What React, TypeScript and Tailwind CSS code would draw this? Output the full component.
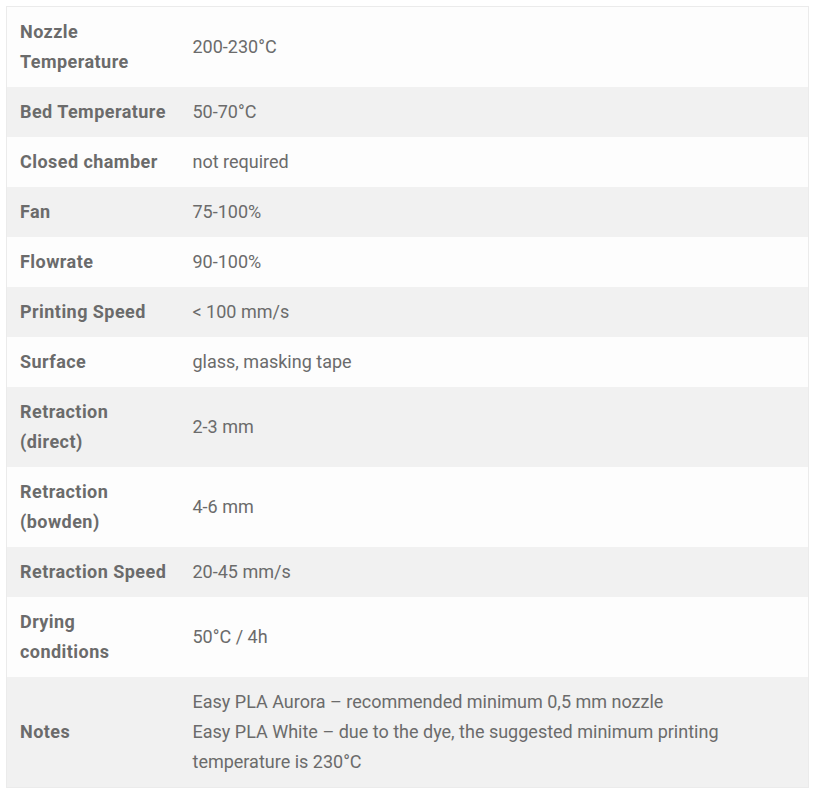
const rows: { label: string; value: string[] }[] = [
  { label: "Nozzle Temperature", value: ["200-230°C"] },
  { label: "Bed Temperature", value: ["50-70°C"] },
  { label: "Closed chamber", value: ["not required"] },
  { label: "Fan", value: ["75-100%"] },
  { label: "Flowrate", value: ["90-100%"] },
  { label: "Printing Speed", value: ["< 100 mm/s"] },
  { label: "Surface", value: ["glass, masking tape"] },
  { label: "Retraction (direct)", value: ["2-3 mm"] },
  { label: "Retraction (bowden)", value: ["4-6 mm"] },
  { label: "Retraction Speed", value: ["20-45 mm/s"] },
  { label: "Drying conditions", value: ["50°C / 4h"] },
  {
    label: "Notes",
    value: [
      "Easy PLA Aurora – recommended minimum 0,5 mm nozzle",
      "Easy PLA White – due to the dye, the suggested minimum printing temperature is 230°C",
    ],
  },
];

export default function App() {
  return (
    <div className="bg-white p-[6px] w-[815px]" style={{ fontFamily: "Roboto, 'Noto Sans', sans-serif" }}>
      <table className="w-[803px] table-fixed border border-[#ebebeb] border-collapse text-[18px] leading-[30px] text-[#6b6b6b]">
        <tbody>
          {rows.map((r, i) => (
            <tr key={i} className={i % 2 === 1 ? "bg-[#f1f1f1]" : "bg-[#fdfdfd]"}>
              <th className="w-[173px] pl-[13px] pr-[13px] py-[10px] text-left align-middle font-bold tracking-[0.45px]">
                {r.label}
              </th>
              <td className="pl-[13px] pr-[10px] py-[10px] align-middle">
                {r.value.map((v, j) => (
                  <div key={j}>{v}</div>
                ))}
              </td>
            </tr>
          ))}
        </tbody>
      </table>
    </div>
  );
}
